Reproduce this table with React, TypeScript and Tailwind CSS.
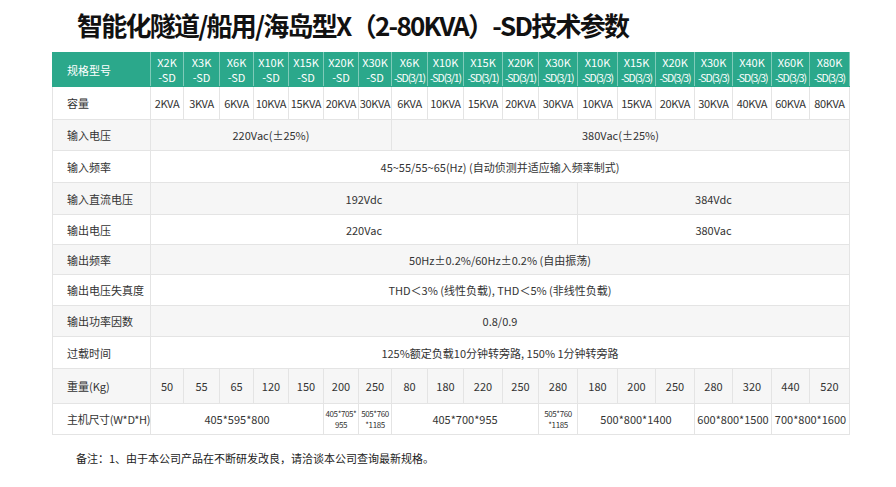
import React from 'react';

const models: [string, string][] = [
  ['X2K', '-SD'],
  ['X3K', '-SD'],
  ['X6K', '-SD'],
  ['X10K', '-SD'],
  ['X15K', '-SD'],
  ['X20K', '-SD'],
  ['X30K', '-SD'],
  ['X6K', '-SD(3/1)'],
  ['X10K', '-SD(3/1)'],
  ['X15K', '-SD(3/1)'],
  ['X20K', '-SD(3/1)'],
  ['X30K', '-SD(3/1)'],
  ['X10K', '-SD(3/3)'],
  ['X15K', '-SD(3/3)'],
  ['X20K', '-SD(3/3)'],
  ['X30K', '-SD(3/3)'],
  ['X40K', '-SD(3/3)'],
  ['X60K', '-SD(3/3)'],
  ['X80K', '-SD(3/3)'],
];

const caps = [2, 3, 6, 10, 15, 20, 30, 6, 10, 15, 20, 30, 10, 15, 20, 30, 40, 60, 80];
const weights = [50, 55, 65, 120, 150, 200, 250, 80, 180, 220, 250, 280, 180, 200, 250, 280, 320, 440, 520];

const td = 'border border-[#e4e4e4] text-center align-middle';
const label = 'border border-[#e4e4e4] pl-[14px] text-left align-middle whitespace-nowrap';
const tiny = 'border border-[#e4e4e4] text-center align-middle text-[8px] leading-[11px] tracking-[-0.4px]';

export default function App() {
  return (
    <div className="w-[896px] h-[487px] bg-white text-[#333] [font-family:'Noto_Sans_CJK_SC',sans-serif] overflow-hidden">
      <h1 className="pl-[77px] pt-[7px] h-[52px] text-[26px] font-bold tracking-[-1.75px] text-[#111] leading-[36px]">
        智能化隧道/船用/海岛型X（2-80KVA）-SD技术参数
      </h1>

      <table className="ml-[52px] w-[797px] table-fixed border-collapse text-[11px] leading-[14px]">
        <colgroup>
          <col className="w-[98px]" />
          <col className="w-[33px]" />
          <col className="w-[36px]" />
          <col className="w-[34px]" />
          <col className="w-[35px]" />
          <col className="w-[35px]" />
          <col className="w-[35px]" />
          <col className="w-[33px]" />
          <col className="w-[36px]" />
          <col className="w-[36px]" />
          <col className="w-[39px]" />
          <col className="w-[36px]" />
          <col className="w-[39px]" />
          <col className="w-[40px]" />
          <col className="w-[38px]" />
          <col className="w-[39px]" />
          <col className="w-[38px]" />
          <col className="w-[39px]" />
          <col className="w-[38px]" />
          <col className="w-[40px]" />
        </colgroup>
        <tbody>
          <tr className="h-[34px] bg-[#2ba88b] text-white">
            <td className="border border-[#2ba88b] border-r-[#7fcbb9] pl-[14px] text-left text-[11px]">规格型号</td>
            {models.map(([a, b], i) => (
              <td key={i} className="border border-[#2ba88b] border-l-[#7fcbb9] border-r-[#7fcbb9] text-center text-[11px] leading-[15px]">
                <div>{a}</div>
                <div className={b.length > 3 ? 'tracking-[-1.1px] text-[10.5px]' : ''}>{b}</div>
              </td>
            ))}
          </tr>
          <tr className="h-[33px] bg-white">
            <td className={label}>容量</td>
            {caps.map((c, i) => (
              <td key={i} className={`${td} tracking-[-0.3px]`}>
                {c}KVA
              </td>
            ))}
          </tr>
          <tr className="h-[31px] bg-[#f6f6f6]">
            <td className={label}>输入电压</td>
            <td className={td} colSpan={7}>220Vac(±25%)</td>
            <td className={td} colSpan={12}>380Vac(±25%)</td>
          </tr>
          <tr className="h-[32px] bg-white">
            <td className={label}>输入频率</td>
            <td className={td} colSpan={19}>45~55/55~65(Hz) (自动侦测并适应输入频率制式)</td>
          </tr>
          <tr className="h-[32px] bg-[#f6f6f6]">
            <td className={label}>输入直流电压</td>
            <td className={td} colSpan={12}>192Vdc</td>
            <td className={td} colSpan={7}>384Vdc</td>
          </tr>
          <tr className="h-[30px] bg-white">
            <td className={label}>输出电压</td>
            <td className={td} colSpan={12}>220Vac</td>
            <td className={td} colSpan={7}>380Vac</td>
          </tr>
          <tr className="h-[30px] bg-[#f6f6f6]">
            <td className={label}>输出频率</td>
            <td className={td} colSpan={19}>50Hz±0.2%/60Hz±0.2% (自由振荡)</td>
          </tr>
          <tr className="h-[31px] bg-white">
            <td className={label}>输出电压失真度</td>
            <td className={td} colSpan={19}>THD＜3% (线性负载), THD＜5% (非线性负载)</td>
          </tr>
          <tr className="h-[31px] bg-[#f6f6f6]">
            <td className={label}>输出功率因数</td>
            <td className={td} colSpan={19}>0.8/0.9</td>
          </tr>
          <tr className="h-[32px] bg-white">
            <td className={label}>过载时间</td>
            <td className={td} colSpan={19}>125%额定负载10分钟转旁路, 150% 1分钟转旁路</td>
          </tr>
          <tr className="h-[35px] bg-[#f6f6f6]">
            <td className={label}>重量(Kg)</td>
            {weights.map((w, i) => (
              <td key={i} className={td}>
                {w}
              </td>
            ))}
          </tr>
          <tr className="h-[31px] bg-white">
            <td className={`${label} pl-[11px] tracking-[-0.3px]`}>主机尺寸(W*D*H)</td>
            <td className={td} colSpan={5}>405*595*800</td>
            <td className={tiny}>
              <div>405*705*</div>
              <div>955</div>
            </td>
            <td className={tiny}>
              <div>505*760</div>
              <div>*1185</div>
            </td>
            <td className={td} colSpan={4}>405*700*955</td>
            <td className={tiny}>
              <div>505*760</div>
              <div>*1185</div>
            </td>
            <td className={td} colSpan={3}>500*800*1400</td>
            <td className={td} colSpan={2}>600*800*1500</td>
            <td className={td} colSpan={2}>700*800*1600</td>
          </tr>
        </tbody>
      </table>

      <p className="pl-[76px] pt-[15px] text-[11px] text-[#222]">
        备注：1、由于本公司产品在不断研发改良，请洽谈本公司查询最新规格。
      </p>
    </div>
  );
}
